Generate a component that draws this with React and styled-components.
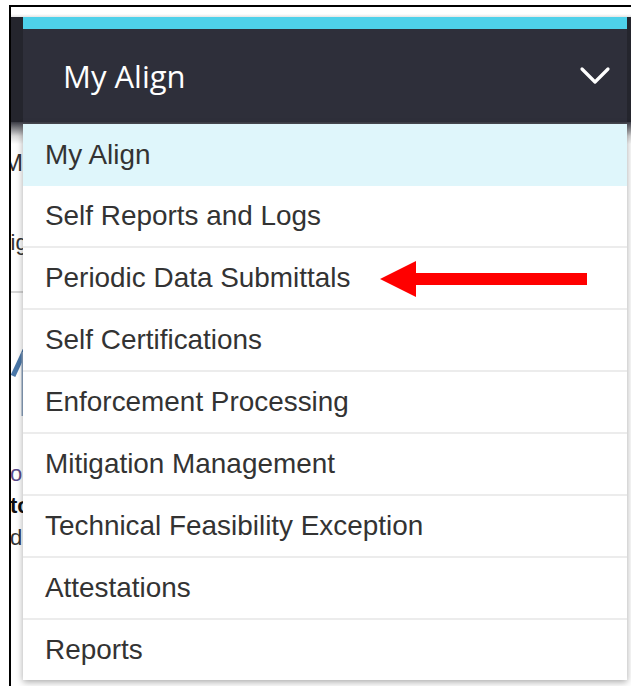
import styled, { createGlobalStyle } from "styled-components"

const GlobalStyle = createGlobalStyle`
  html, body {
    margin: 0;
    background: #fff;
    overflow: hidden;
  }
  body {
    padding: 5px 0 0 9px;
    font-family: "Liberation Sans", Arial, sans-serif;
  }
`

const menuItems = [
  "My Align",
  "Self Reports and Logs",
  "Periodic Data Submittals",
  "Self Certifications",
  "Enforcement Processing",
  "Mitigation Management",
  "Technical Feasibility Exception",
  "Attestations",
  "Reports",
]

const Frame = styled.div`
  position: relative;
  height: 679px;
  border-top: 2px solid #000;
  border-left: 2px solid #000;
  overflow: hidden;
`

const TopGap = styled.div`
  height: 10px;
  background: linear-gradient(#fff 70%, #e4e4e4);
`

const NavBar = styled.nav`
  display: flex;
  height: 105px;
  padding: 0 4px 0 12px;
  background: #24252d;
`

const Toggle = styled.div`
  flex: 1;
  display: flex;
  align-items: center;
  justify-content: space-between;
  padding: 0 16px 0 40px;
  border-top: 12px solid #4ed1ea;
  background: #2e2f3a;
  color: #fff;
  font-family: "Open Sans", sans-serif;
  font-size: 31px;
`

const PageArea = styled.div`
  position: relative;
  height: 560px;
  background: linear-gradient(#3a3b44, #d8d8d8 14px, #fff 22px);
`

/* strip of the page that stays visible left of the open menu */
const Backdrop = styled.div`
  width: 21px;
  margin-left: -9px;
  padding-top: 26px;
  overflow: hidden;
  white-space: nowrap;
  color: #333;
  font-size: 22px;
  line-height: 30px;
`

const Crumb = styled.div`
  height: 80px;
  margin-left: 1px;
  font-size: 24px;
`

const Heading = styled.div`
  height: 63px;
  margin-left: -11px;
  border-bottom: 2px solid #d6d6d6;
`

const Logo = styled.svg`
  display: block;
  margin: 55px 0 0 9px;
`

const Blurb = styled.p`
  margin: 40px 0 0 8px;
  line-height: 32px;

  span {
    color: #5a4a8a;
  }

  b {
    color: #111;
  }
`

const Menu = styled.ul`
  position: absolute;
  top: 2px;
  left: 12px;
  width: 604px;
  margin: 0;
  padding: 0;
  list-style: none;
  background: #fff;
  box-shadow: 0 2px 7px rgba(0, 0, 0, 0.35);
`

const Item = styled.li`
  display: flex;
  align-items: center;
  height: ${(p) => (p.$active ? "62px" : "60px")};
  padding-left: 22px;
  border-bottom: ${(p) => (p.$active ? "none" : "2px solid #ececec")};
  background: ${(p) => (p.$active ? "#dff6fb" : "#fff")};
  color: #333;
  font-size: 27.9px;
  white-space: nowrap;

  &:last-child {
    border-bottom: none;
  }
`

const Arrow = styled.svg`
  position: absolute;
  left: 369px;
  top: 254px;
`

function Chevron() {
  return (
    <svg width="32" height="20" viewBox="0 0 32 20">
      <polyline
        points="3,3 16,16 29,3"
        fill="none"
        stroke="#fff"
        strokeWidth="3.2"
        strokeLinecap="round"
        strokeLinejoin="round"
      />
    </svg>
  )
}

export default function App() {
  return (
    <>
      <GlobalStyle />
      <Frame>
        <TopGap />
        <NavBar>
          <Toggle>
            <span>My Align</span>
            <Chevron />
          </Toggle>
        </NavBar>
        <PageArea>
          <Backdrop>
            <Crumb>M</Crumb>
            <Heading>Alig</Heading>
            <Logo width="20" height="70" viewBox="0 0 20 70">
              <path d="M2 28 L14 2" stroke="#4a77a8" strokeWidth="5" fill="none" />
              <path d="M12 4 L12 68" stroke="#8ea6c2" strokeWidth="3" fill="none" />
            </Logo>
            <Blurb>
              <span>ol</span>
              <br />
              <b>to</b>
              <br />
              d
            </Blurb>
          </Backdrop>
          <Menu>
            {menuItems.map((label, i) => (
              <Item key={label} $active={i === 0}>
                {label}
              </Item>
            ))}
          </Menu>
        </PageArea>
        <Arrow width="208" height="37" viewBox="0 0 208 37">
          <polygon points="0,18 36,0 36,36" fill="#ff0000" />
          <rect x="35" y="12" width="172" height="12" fill="#ff0000" />
        </Arrow>
      </Frame>
    </>
  )
}
